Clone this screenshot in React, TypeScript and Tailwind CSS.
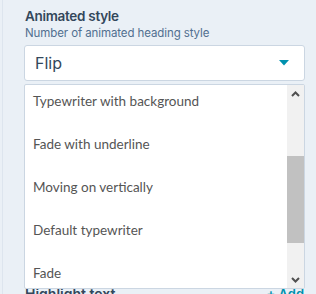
import React from "react";

const items = [
  "Typewriter with background",
  "Fade with underline",
  "Moving on vertically",
  "Default typewriter",
  "Fade",
];

export default function App() {
  return (
    <div className="w-[316px] h-[294px] overflow-hidden bg-[#eaf0f6] relative" style={{ fontFamily: "Inter, 'Noto Sans', sans-serif" }}>
      <div className="absolute left-[2px] top-0 bottom-0 w-px bg-[#dde5ee]" />
      <div className="pl-[25px] pr-[11px] pt-[7px]">
        <div className="text-[13.5px] font-semibold leading-[18px] text-[#33475b] tracking-[-0.3px]">Animated style</div>
        <div className="text-[11.5px] leading-[16px] text-[#516f90] tracking-[-0.1px]">Number of animated heading style</div>
        <div className="mt-[4px] -ml-[1px] h-[36px] bg-white border border-[#cbd6e2] rounded-[3px] flex items-center justify-between pl-[10px] pr-[15px]">
          <span className="text-[16px] text-[#33475b]">Flip</span>
          <svg width="10" height="6" viewBox="0 0 10 6"><path d="M0 0 H10 L5 5.5 Z" fill="#0091ae" /></svg>
        </div>
        <div className="mt-[204px] flex justify-between items-center text-[14px] font-semibold leading-[18px]">
          <span className="text-[#33475b]">Highlight text</span>
          <span className="text-[#0091ae] text-[13px] pr-[1px]">+ Add</span>
        </div>
      </div>
      <div
        className="absolute left-[24px] top-[84px] w-[281px] h-[205px] bg-white border border-[#cbd6e2] rounded-[2px] flex overflow-hidden"
        style={{ fontFamily: "Lato, 'Noto Sans', sans-serif" }}
      >
        <div className="flex-1 flex flex-col -mt-[5px]">
          {items.map((t) => (
            <div
              key={t}
              className="h-[43px] shrink-0 flex items-center pl-[8px] text-[13.5px] text-[#555555]"
            >
              {t}
            </div>
          ))}
        </div>
        <div className="w-[17px] bg-[#f1f1f1] flex flex-col">
          <div className="h-[17px] flex items-center justify-center">
            <svg width="9" height="6" viewBox="0 0 9 6"><path d="M1 5 L4.5 1.5 L8 5" stroke="#505050" strokeWidth="2" fill="none" /></svg>
          </div>
          <div className="h-[54px]" />
          <div className="h-[87px] bg-[#c1c1c1]" />
          <div className="flex-1" />
          <div className="h-[17px] flex items-center justify-center">
            <svg width="9" height="6" viewBox="0 0 9 6"><path d="M1 1 L4.5 4.5 L8 1" stroke="#505050" strokeWidth="2" fill="none" /></svg>
          </div>
        </div>
      </div>
    </div>
  );
}
